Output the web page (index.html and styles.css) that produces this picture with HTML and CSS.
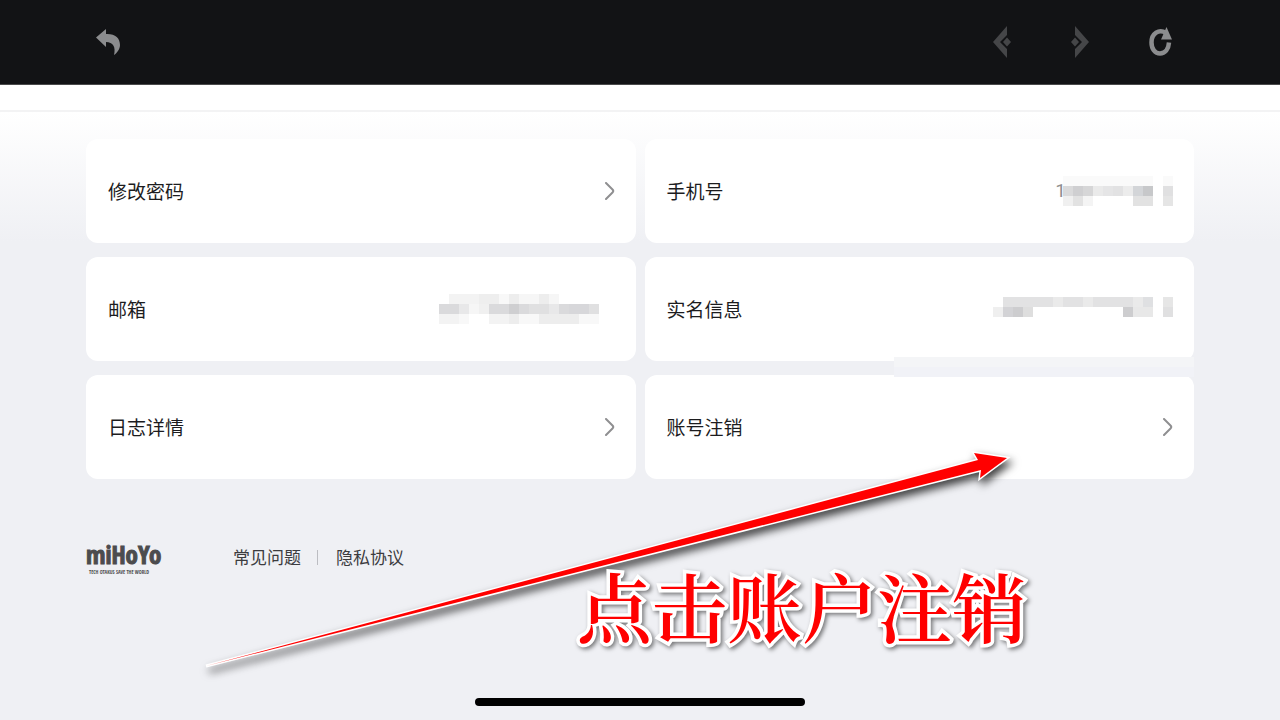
FILE: index.html
```html
<!DOCTYPE html>
<html lang="zh-CN">
<head>
<meta charset="utf-8">
<meta name="viewport" content="width=device-width, initial-scale=1">
<title>账号管理</title>
<link rel="stylesheet" href="styles.css">
</head>
<body>
<header class="toolbar">
  <button class="tool" aria-label="返回">
    <svg width="24" height="28" viewBox="0 0 24 28"><path fill="#8b8c8e" d="M0 9.500 10 1v5c9-.5 14 4 14 11 0 4-3 8-6 10 2-8-1-13-8-13v5z"/></svg>
  </button>
  <div class="tools">
    <button class="tool" aria-label="后退">
      <svg width="18" height="32" viewBox="0 0 18 32"><path fill="#454648" d="M14 0v9L7 16l7 7v9L0 16zM14 11.500l4 4.500-4 4.500L10 16z"/></svg>
    </button>
    <button class="tool" aria-label="前进">
      <svg width="18" height="32" viewBox="0 0 18 32"><path fill="#454648" d="M4 0v9l7 7-7 7v9l14-16zM4 11.500 8 16l-4 4.500L0 16z"/></svg>
    </button>
    <button class="tool" aria-label="刷新">
      <svg width="24" height="30" viewBox="0 0 24 30"><path fill="none" stroke="#8b8c8e" stroke-width="4.500" d="M17 6C10 1.500 2.500 6.500 2.500 15.500c0 6.500 3.500 11 8.500 11s8.500-4 9-11"/><path fill="#8b8c8e" d="M17.500 0 23 12.500H12z"/></svg>
    </button>
  </div>
</header>
<div class="strip"></div>
<main class="page">
  <div class="cards">
    <button class="card"><span>修改密码</span>
      <svg class="chevron" width="10" height="18" viewBox="0 0 10 18"><path d="M1 1 7.500 7.500Q9 9 7.500 10.500L1 17"/></svg>
    </button>
    <button class="card"><span>手机号</span>
      <span class="masked"><span class="digit">1</span>
      <svg width="110" height="30" viewBox="0 0 110 30" shape-rendering="crispEdges">
        <path fill="#fafafa" d="M0 0h90v10H0zM100 0h10v10h-10z"/>
        <path fill="#dadadb" d="M0 10h10v10H0z"/><path fill="#cfcfd1" d="M10 10h10v10H10z"/><path fill="#d6d6d7" d="M20 10h10v10H20z"/><path fill="#eaeaea" d="M30 10h10v10H30z"/><path fill="#e5e5e6" d="M40 10h10v10H40z"/><path fill="#e2e2e3" d="M50 10h10v10H50z"/><path fill="#ececec" d="M60 10h10v10H60z"/><path fill="#d3d5d8" d="M70 10h10v10H70z"/><path fill="#c7c8ca" d="M80 10h10v10H80z"/><path fill="#e0e0e1" d="M100 10h10v10h-10z"/>
        <path fill="#f0f0f0" d="M0 20h10v10H0z"/><path fill="#e2e2e2" d="M10 20h10v10H10zM70 20h20v10H70z"/><path fill="#f4f4f4" d="M20 20h10v10H20z"/><path fill="#e5e5e5" d="M100 20h10v10h-10z"/>
      </svg></span>
    </button>
    <button class="card"><span>邮箱</span>
      <svg class="mosaic-mail" width="160" height="30" viewBox="0 0 160 30" shape-rendering="crispEdges">
        <path fill="#f3f3f3" d="M10 0h30v10H10z"/><path fill="#eeeeee" d="M40 0h20v10H40z"/><path fill="#f8f8f8" d="M60 0h10v10H60z"/><path fill="#ededed" d="M70 0h10v10H70zM100 0h10v10h-10z"/><path fill="#f6f6f6" d="M80 0h20v10H80zM110 0h10v10h-10z"/>
        <path fill="#dadadc" d="M0 10h20v10H0zM50 10h20v10H50zM80 10h10v10H80zM120 10h10v10h-10z"/><path fill="#e8e8e9" d="M20 10h10v10H20zM110 10h10v10h-10z"/><path fill="#f6f6f6" d="M30 10h10v10H30z"/><path fill="#f0f0f0" d="M40 10h10v10H40z"/><path fill="#cfcfd1" d="M70 10h10v10H70z"/><path fill="#e0e0e1" d="M90 10h20v10H90zM150 10h10v10h-10z"/><path fill="#d7d7da" d="M130 10h20v10h-20z"/>
        <path fill="#f3f3f3" d="M0 20h20v10H0zM50 20h20v10H50z"/><path fill="#f8f8f8" d="M20 20h10v10H20zM80 20h20v10H80zM140 20h20v10h-20z"/><path fill="#ededed" d="M70 20h10v10H70zM100 20h40v10h-40z"/>
      </svg>
    </button>
    <button class="card"><span>实名信息</span>
      <svg class="mosaic-name" width="180" height="20" viewBox="0 0 180 20" shape-rendering="crispEdges">
        <path fill="#e2e2e3" d="M10 0h50v10H10zM70 0h20v10H70zM100 0h40v10h-40z"/><path fill="#eaeaea" d="M60 0h10v10H60zM90 0h10v10H90zM140 0h10v10h-10z"/><path fill="#dfe0e2" d="M150 0h10v10h-10z"/><path fill="#e6e6e6" d="M170 0h10v10h-10z"/>
        <path fill="#efefef" d="M0 10h10v10H0z"/><path fill="#d3d3d6" d="M10 10h10v10H10z"/><path fill="#cdcdcf" d="M20 10h10v10H20zM130 10h10v10h-10z"/><path fill="#dedede" d="M30 10h10v10H30z"/><path fill="#e8e8e8" d="M140 10h20v10h-20z"/><path fill="#e0e0e1" d="M170 10h10v10h-10z"/>
      </svg>
      <span class="patch"></span>
    </button>
    <button class="card"><span>日志详情</span>
      <svg class="chevron" width="10" height="18" viewBox="0 0 10 18"><path d="M1 1 7.500 7.500Q9 9 7.500 10.500L1 17"/></svg>
    </button>
    <button class="card"><span>账号注销</span>
      <svg class="chevron" width="10" height="18" viewBox="0 0 10 18"><path d="M1 1 7.500 7.500Q9 9 7.500 10.500L1 17"/></svg>
    </button>
  </div>
  <footer class="footer">
    <div class="logo"><span class="brand">miHoYo</span><span class="tagline">TECH OTAKUS SAVE THE WORLD</span></div>
    <nav class="links">
      <a href="#faq">常见问题</a>
      <a href="#privacy">隐私协议</a>
    </nav>
  </footer>
</main>
<div class="home-bar"></div>
<svg class="arrow" viewBox="0 0 1280 720" aria-hidden="true">
  <path d="M206 666 978 460 974 453 1007 458 980 478 981 470z"/>
</svg>
<p class="callout">点击账户注销</p>
</body>
</html>
```
FILE: styles.css
```css
* {
  box-sizing: border-box;
}

body {
  position: relative;
  display: flex;
  flex-direction: column;
  min-height: 100vh;
  margin: 0;
  background: #eff0f4;
  color: #1c1c1e;
  font-family: "Noto Sans CJK SC", sans-serif;
}

button {
  margin: 0;
  border: 0;
  color: inherit;
  font: inherit;
  cursor: pointer;
}

svg {
  display: block;
  flex: none;
}

.toolbar {
  display: flex;
  align-items: center;
  justify-content: space-between;
  height: 85px;
  padding: 0 107px 0 96px;
  border-bottom: 1px solid #4a4a4b;
  background: #121315;
}

.tools {
  display: flex;
  align-items: center;
  gap: 60px;
}

.tool {
  padding: 0;
  background: none;
}

.strip {
  height: 27px;
  border-bottom: 2px solid #f3f3f4;
  background: #fff;
}

.page {
  flex: 1;
  padding: 27px 86px 0;
  background: linear-gradient(#fff, #eff0f4 130px);
}

.cards {
  display: grid;
  grid-template-columns: 1fr 1fr;
  gap: 14px 9px;
}

.card {
  position: relative;
  display: flex;
  align-items: center;
  justify-content: space-between;
  height: 104px;
  padding: 0 21px 0 22px;
  border-radius: 12px;
  background: #fff;
  font-size: 19px;
  line-height: 28px;
}

.chevron {
  fill: none;
  stroke: #8f8f91;
  stroke-width: 2;
  stroke-linecap: round;
  stroke-linejoin: round;
}

.masked {
  display: flex;
  align-items: center;
}

.digit {
  margin-right: -3px;
  color: #8f8f91;
  font-family: Roboto, sans-serif;
}

.mosaic-mail {
  margin-right: 16px;
}

.mosaic-name {
  margin-bottom: 4px;
}

.patch {
  position: absolute;
  z-index: 1;
  right: 0;
  bottom: -16px;
  width: 300px;
  height: 20px;
  background: linear-gradient(#f4f5f7 50%, #f1f2f7 50%);
}

.footer {
  display: flex;
  align-items: center;
  gap: 72px;
  margin-top: 60px;
}

.logo {
  display: flex;
  flex-direction: column;
  width: 75px;
  color: #4c4c4e;
  white-space: nowrap;
}

.brand {
  font: bold 25px/30px "Liberation Sans Narrow", "Open Sans Condensed", Roboto, sans-serif;
  -webkit-text-stroke: 1px #4c4c4e;
}

.tagline {
  padding-left: 3px;
  font: 5px/6px "Liberation Sans Narrow", "Open Sans Condensed", sans-serif;
}

.links {
  display: flex;
  align-items: center;
  font-size: 17px;
  line-height: 24px;
}

.links a {
  color: #3c3c3f;
  text-decoration: none;
}

.links a + a::before {
  display: inline-block;
  width: 1px;
  height: 15px;
  margin: 0 18px 0 16px;
  background: #bcbdc2;
  content: "";
  vertical-align: -1px;
}

.home-bar {
  width: 330px;
  height: 8px;
  margin: 0 auto 14px;
  border-radius: 4px;
  background: #000;
}

.arrow {
  position: absolute;
  z-index: 2;
  top: 0;
  left: 0;
  width: 100%;
  fill: #f00;
  stroke: #fff;
  stroke-width: 3;
  paint-order: stroke;
  filter: drop-shadow(3px 5px 4px rgb(0 0 0 / 75%));
  pointer-events: none;
}

.callout {
  position: absolute;
  z-index: 3;
  top: 561px;
  left: 577px;
  margin: 0;
  color: #f00;
  font-family: "Noto Serif CJK SC", "Noto Sans CJK SC", serif;
  font-size: 75px;
  font-weight: 600;
  line-height: 88px;
  white-space: nowrap;
  -webkit-text-stroke: 7px #fff;
  paint-order: stroke fill;
  filter: drop-shadow(2px 2px 2px rgb(0 0 0 / 50%));
  pointer-events: none;
}
```
